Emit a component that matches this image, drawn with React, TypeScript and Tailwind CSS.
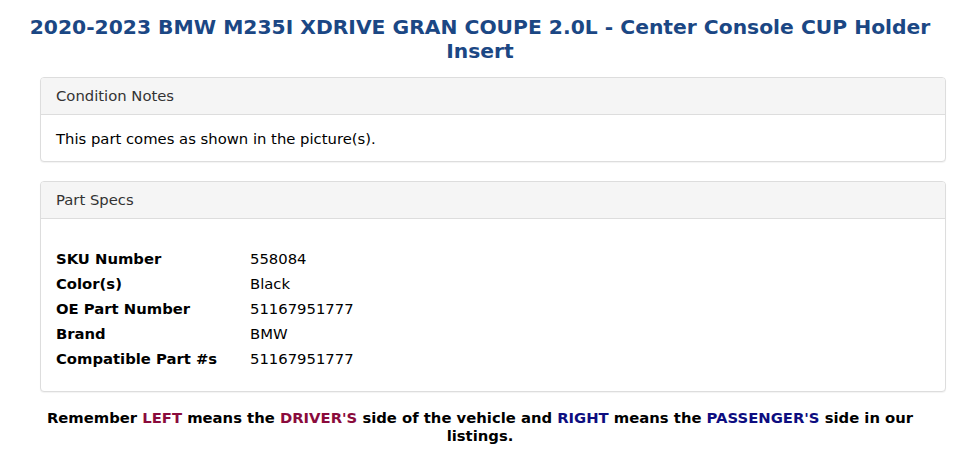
const specs = [
  { label: "SKU Number", value: "558084" },
  { label: "Color(s)", value: "Black" },
  { label: "OE Part Number", value: "51167951777" },
  { label: "Brand", value: "BMW" },
  { label: "Compatible Part #s", value: "51167951777" },
];

function Panel({ title, children }: { title: string; children: React.ReactNode }) {
  return (
    <div className="rounded-[4px] border border-[#dddddd] bg-white shadow-[0_1px_1px_rgba(0,0,0,0.05)]">
      <div className="rounded-t-[3px] border-b border-[#dddddd] bg-[#f5f5f5] px-[15px] py-[10px] text-[14.8px] leading-[16px] text-[#333333]">
        {title}
      </div>
      <div className="px-[15px] py-[15px] text-[14.8px] text-black">{children}</div>
    </div>
  );
}

export default function App() {
  return (
    <div className="min-h-screen bg-white font-['DejaVu_Sans',sans-serif]">
      <h1 className="px-[20px] pt-[15px] text-center text-[20.3px] font-bold leading-[24px] text-[#1b4784]">
        2020-2023 BMW M235I XDRIVE GRAN COUPE 2.0L - Center Console CUP Holder Insert
      </h1>

      <div className="ml-[40px] mr-[14px] mt-[14px] flex flex-col gap-[19px]">
        <Panel title="Condition Notes">
          <p className="pt-[1px] leading-[15px]">This part comes as shown in the picture(s).</p>
        </Panel>

        <Panel title="Part Specs">
          <div className="pt-[12px] pb-[5px]">
            {specs.map((s) => (
              <div key={s.label} className="flex leading-[25px]">
                <div className="w-[194px] shrink-0 font-bold">{s.label}</div>
                <div>{s.value}</div>
              </div>
            ))}
          </div>
        </Panel>
      </div>

      <p className="mx-auto mt-[17px] max-w-[900px] px-[10px] text-center text-[14.8px] font-bold leading-[18px] text-black">
        Remember <span className="text-[#8a0b3c]">LEFT</span> means the{" "}
        <span className="text-[#8a0b3c]">DRIVER'S</span> side of the vehicle and{" "}
        <span className="text-[#0d0d80]">RIGHT</span> means the{" "}
        <span className="text-[#0d0d80]">PASSENGER'S</span> side in our listings.
      </p>
    </div>
  );
}
